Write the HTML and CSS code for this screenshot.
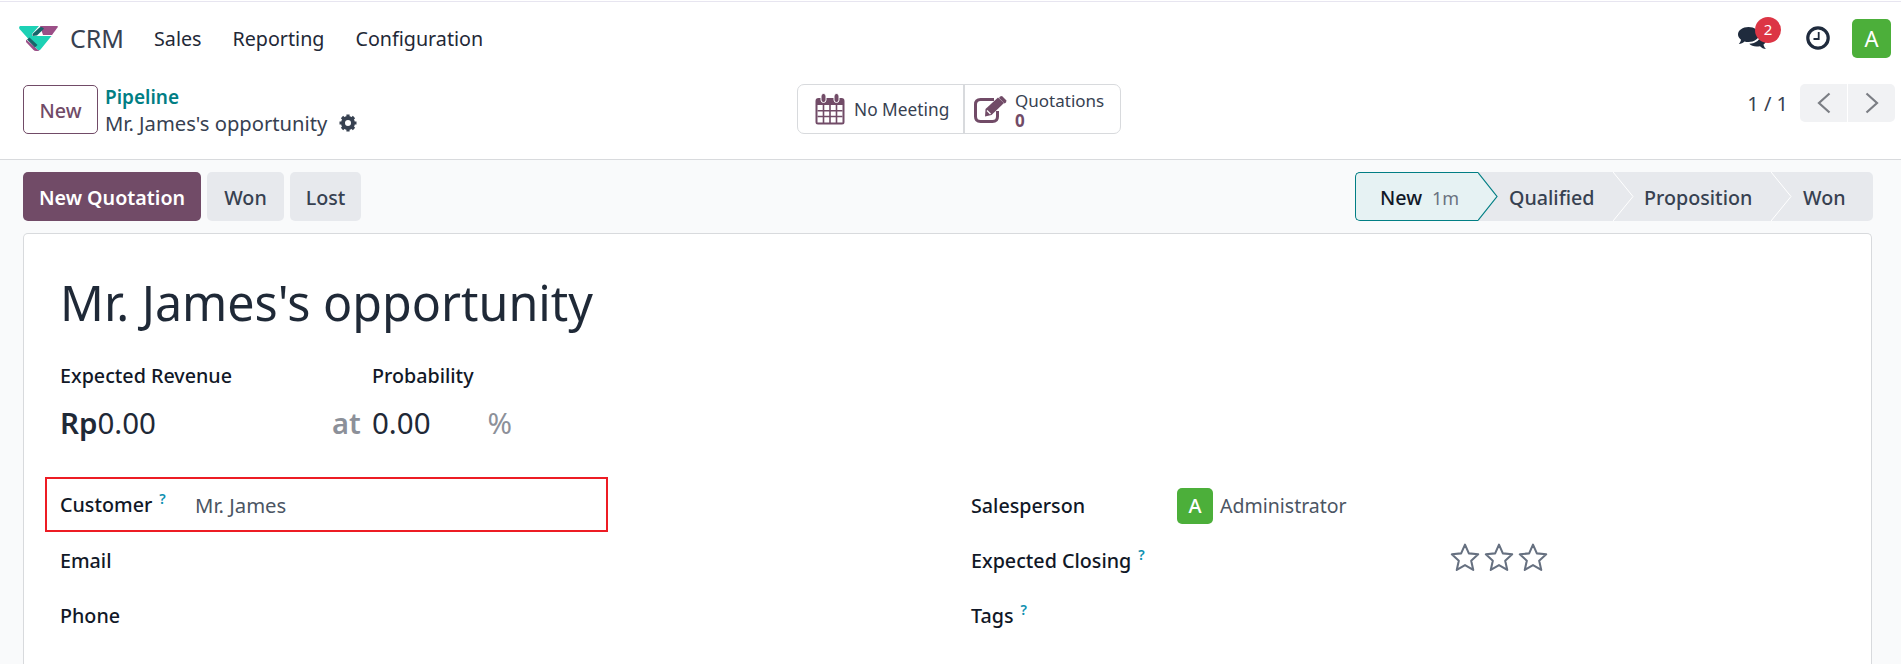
FILE: index.html
```html
<!DOCTYPE html>
<html lang="en">
<head>
<meta charset="utf-8">
<title>Mr. James's opportunity</title>
<link rel="stylesheet" href="styles.css">
</head>
<body>
<div class="app">
  <div class="topline"></div>
  <header class="navbar">
    <svg class="logo" width="39" height="25" viewBox="0 0 39 25">
      <path d="M21 0H38Q39.500 0 38.500 1.500L33 9H24Z" fill="#9b4f87"/>
      <path d="M7 13.500 20.500 25H17Q15.500 25 14 23.500L7 16Z" fill="#9b4f87"/>
      <path d="M1 0H20L13 8V10H32.500L21.500 23.500Q20 25 18.500 23.500L9 12.500 .5 3Q-.5 1 1 0Z" fill="#1dd1b5"/>
      <path d="M13.500 8 20.500 1.500Q22 .2 24 1.800L25 2.800 18 9.500 13.500 10Z" fill="#17656a"/>
      <path d="M8 13.500 10.500 11.500 18.500 19 16 21.500Z" fill="#17656a"/>
    </svg>
    <span class="brand">CRM</span>
    <nav class="menu">
      <a>Sales</a>
      <a>Reporting</a>
      <a>Configuration</a>
    </nav>
    <div class="systray">
      <div class="chat">
        <svg width="29" height="23" viewBox="0 0 29 23">
          <path d="M10.5 0C16.3 0 21 3.300 21 7.500S16.300 15 10.500 15C9 15 7.700 14.800 6.500 14.400 5 15.800 3 16.800.8 17 2 15.700 2.700 14.300 3 12.700 1.200 11.400 0 9.500 0 7.500 0 3.300 4.700 0 10.500 0Z" fill="#1f2b3d"/>
          <path d="M22.500 6.500C26 7.500 28.500 9.800 28.500 12.500 28.500 14.500 27.300 16.200 25.500 17.400 25.800 19 26.500 20.500 28 22 25.500 21.800 23.500 20.800 22 19.200 20.900 19.500 19.700 19.600 18.500 19.600 15.500 19.600 12.900 18.500 11.300 16.800 17.800 16.600 23 12.800 22.500 6.500Z" fill="#1f2b3d"/>
        </svg>
        <span class="badge">2</span>
      </div>
      <svg class="clock" width="24" height="24" viewBox="0 0 24 24">
        <circle cx="12" cy="12" r="10.200" fill="none" stroke="#1f2b3d" stroke-width="3.200"/>
        <path d="M12.700 6V13H7.500" fill="none" stroke="#1f2b3d" stroke-width="1.800"/>
      </svg>
      <span class="avatar avatar-lg">A</span>
    </div>
  </header>

  <section class="control">
    <div class="control-left">
      <button class="btn btn-outline">New</button>
      <div class="crumbs">
        <a class="crumb-link">Pipeline</a>
        <div class="crumb-current">Mr. James's opportunity
          <svg class="gear" width="18" height="18" viewBox="0 0 18 18">
            <circle cx="9" cy="9" r="5" fill="none" stroke="#374151" stroke-width="4"/>
            <path d="M9 0.500V3.500M9 14.500V17.500M0.500 9H3.500M14.500 9H17.500M3 3L5 5M13 13L15 15M15 3L13 5M5 13L3 15" stroke="#374151" stroke-width="3.200"/>
          </svg>
        </div>
      </div>
    </div>
    <div class="stats">
      <div class="stat stat-meeting">
        <svg width="30" height="32" viewBox="0 0 30 32">
          <path d="M1.500 5H26.500Q29.500 5 29.500 8V29Q29.500 31.500 27 31.500H3Q.5 31.500 .5 29V8Q.5 5 3.500 5Z" fill="#714b67"/>
          <path d="M2.500 12H27.500V29.500H2.500Z" fill="#fff"/>
          <path d="M2.500 17.700H27.500M2.500 23.500H27.500M8.500 12V30M15 12V30M21.500 12V30" stroke="#714b67" stroke-width="1.600"/>
          <rect x="6" y="0.500" width="5" height="9" rx="2.500" fill="#714b67" stroke="#fff"/>
          <rect x="19" y="0.500" width="5" height="9" rx="2.500" fill="#714b67" stroke="#fff"/>
        </svg>
        <span class="stat-text stat-text-meeting">No Meeting</span>
      </div>
      <div class="stat stat-quote">
        <svg width="33" height="27" viewBox="0 0 33 27">
          <path d="M20 3.500H6.500Q1.500 3.500 1.500 8.500V20.500Q1.500 25.500 6.500 25.500H18.500Q23.500 25.500 23.500 20.500V15" fill="none" stroke="#714b67" stroke-width="3"/>
          <path d="M11.500 13 24 1.500 30 7 17.500 19 11 20.500Z" fill="#714b67"/>
          <path d="M26 0.500 28 0 32.500 4.500 32 6.500 30.500 7.500 25 2Z" fill="#714b67"/>
          <path d="M13 14.500 16.500 18" stroke="#fff" stroke-width="1.200"/>
        </svg>
        <div class="stat-stack">
          <span class="stat-text">Quotations</span>
          <span class="stat-num">0</span>
        </div>
      </div>
    </div>
    <div class="pager">
      <span class="pager-count">1 / 1</span>
      <div class="pager-btns">
        <button class="pager-btn">
          <svg width="14" height="22" viewBox="0 0 14 22"><path d="M12.500 1.500 2 11 12.500 20.500" fill="none" stroke="#7b7e84" stroke-width="2.200"/></svg>
        </button>
        <button class="pager-btn">
          <svg width="14" height="22" viewBox="0 0 14 22"><path d="M1.500 1.500 12 11 1.500 20.500" fill="none" stroke="#7b7e84" stroke-width="2.200"/></svg>
        </button>
      </div>
    </div>
  </section>

  <main class="content">
    <div class="actions">
      <div class="action-btns">
        <button class="btn btn-primary">New Quotation</button>
        <button class="btn btn-grey">Won</button>
        <button class="btn btn-grey">Lost</button>
      </div>
      <div class="statusbar">
        <div class="stage stage-active">New <span class="stage-age">1m</span></div>
        <svg class="tip" width="20" height="49" viewBox="0 0 20 49"><path d="M0 0.500 19 24.500 0 48.500" fill="#e6f2f3" stroke="#017e84" stroke-width="1.200"/></svg>
        <div class="stage stage-q">Qualified</div>
        <svg class="sep" width="21" height="49" viewBox="0 0 21 49"><path d="M0 0 20 24.500 0 49" fill="none" stroke="#fff" stroke-width="1"/></svg>
        <div class="stage stage-p">Proposition</div>
        <svg class="sep" width="21" height="49" viewBox="0 0 21 49"><path d="M0 0 20 24.500 0 49" fill="none" stroke="#fff" stroke-width="1"/></svg>
        <div class="stage stage-w">Won</div>
      </div>
    </div>

    <article class="sheet">
      <h1 class="title">Mr. James's opportunity</h1>
      <div class="metrics">
        <div class="metric metric-rev">
          <div class="label">Expected Revenue</div>
          <div class="value"><b class="cur">Rp</b>0.00</div>
        </div>
        <div class="at">at</div>
        <div class="metric metric-prob">
          <div class="label">Probability</div>
          <div class="value value-prob"><span>0.00</span><span class="pct">%</span></div>
        </div>
      </div>
      <div class="groups">
        <div class="group group-left">
          <div class="row row-marked">
            <span class="label row-label">Customer<sup class="help">?</sup></span>
            <span class="row-value value-customer">Mr. James</span>
          </div>
          <div class="row"><span class="label row-label">Email</span></div>
          <div class="row"><span class="label row-label">Phone</span></div>
        </div>
        <div class="group group-right">
          <div class="row">
            <span class="label row-label-r">Salesperson</span>
            <span class="avatar avatar-sm">A</span>
            <span class="row-value">Administrator</span>
          </div>
          <div class="row">
            <span class="label row-label-r">Expected Closing<sup class="help">?</sup></span>
            <div class="stars">
              <svg width="34" height="33" viewBox="0 0 24 24"><path d="M12 2.600 14.800 9 21.600 9.700 16.500 14.300 18 21 12 17.500 6 21 7.500 14.300 2.400 9.700 9.200 9Z" fill="none" stroke="#667080" stroke-width="1.500" stroke-linejoin="round"/></svg>
              <svg width="34" height="33" viewBox="0 0 24 24"><path d="M12 2.600 14.800 9 21.600 9.700 16.500 14.300 18 21 12 17.500 6 21 7.500 14.300 2.400 9.700 9.200 9Z" fill="none" stroke="#667080" stroke-width="1.500" stroke-linejoin="round"/></svg>
              <svg width="34" height="33" viewBox="0 0 24 24"><path d="M12 2.600 14.800 9 21.600 9.700 16.500 14.300 18 21 12 17.500 6 21 7.500 14.300 2.400 9.700 9.200 9Z" fill="none" stroke="#667080" stroke-width="1.500" stroke-linejoin="round"/></svg>
            </div>
          </div>
          <div class="row"><span class="label row-label-r">Tags<sup class="help">?</sup></span></div>
        </div>
      </div>
    </article>
  </main>
</div>
</body>
</html>
```

FILE: styles.css
```css
* { box-sizing: border-box; }
html, body { margin: 0; height: 100%; overflow: hidden; background: #fff; }
body { font-family: "Noto Sans", "Open Sans", sans-serif; font-size: 19.700px; color: #374151; }
.app { height: 664px; display: flex; flex-direction: column; overflow: hidden; }
.topline { height: 1px; margin-top: 1px; background: #e7e5f0; flex: none; }

.navbar { height: 72px; flex: none; display: flex; align-items: center; padding: 0 10px 0 19px; }
.logo { flex: none; margin-right: 12px; }
.brand { font-size: 25px; color: #374151; margin-right: 30px; }
.menu { display: flex; gap: 31px; color: #1f2937; }
.systray { margin-left: auto; display: flex; align-items: center; }
.chat { position: relative; display: flex; margin-right: 39px; }
.badge { position: absolute; top: -10px; left: 17px; width: 26px; height: 26px; border-radius: 50%; background: #dc3545; color: #fff; font-size: 15px; line-height: 25px; text-align: center; }
.clock { margin-right: 22px; }
.avatar { display: flex; align-items: center; justify-content: center; background: #4caf3a; color: #fff; border-radius: 5px; }
.avatar-lg { width: 39px; height: 39px; font-size: 22px; }
.avatar-sm { width: 36px; height: 36px; font-size: 20px; font-weight: 500; margin: 0 7px 0 1px; }

.control { height: 86px; flex: none; border-bottom: 1px solid #d8dadd; display: grid; grid-template-columns: 774px 324px 1fr; padding: 10px 6px 0 23px; align-items: start; }
.control-left { display: flex; gap: 7px; padding-top: 1px; }
.btn { font: inherit; font-weight: 500; height: 49px; border-radius: 5px; border: 1px solid transparent; padding: 2px 0 0; color: #374151; }
.btn-outline { width: 75px; background: #fff; border-color: #714b67; color: #714b67; }
.crumbs { display: flex; flex-direction: column; line-height: 26px; margin-top: -1px; }
.crumb-link { color: #017e84; font-weight: 600; font-size: 19px; }
.crumb-current { display: flex; align-items: center; gap: 12px; color: #374151; font-size: 20.200px; }
.gear { flex: none; }

.stats { display: flex; height: 50px; border: 1px solid #d8dadd; border-radius: 7px; }
.stat { display: flex; align-items: center; }
.stat-meeting { width: 167px; padding-left: 17px; gap: 9px; border-right: 2px solid #d8dadd; }
.stat-quote { flex: 1; padding-left: 9px; gap: 8px; }
.stat-text { font-size: 17px; color: #374151; line-height: 20px; }
.stat-text-meeting { font-size: 17.300px; padding-top: 2px; }
.stat-stack { display: flex; flex-direction: column; padding-top: 2px; }
.stat-num { font-size: 17px; font-weight: 700; color: #714b67; line-height: 19px; }

.pager { display: flex; align-items: center; justify-content: flex-end; gap: 12px; height: 38px; }
.pager-count { font-size: 20px; color: #374151; }
.pager-btns { display: flex; gap: 1px; width: 95px; height: 38px; }
.pager-btn { flex: 1; border: 0; padding: 0; background: #f1f2f4; display: flex; align-items: center; justify-content: center; }
.pager-btn:first-child { border-radius: 5px 0 0 5px; }
.pager-btn:last-child { border-radius: 0 5px 5px 0; }

.content { flex: 1; min-height: 0; background: #f9fafb; padding: 12px 29px 0 23px; display: flex; flex-direction: column; gap: 12px; }
.actions { display: flex; justify-content: space-between; flex: none; }
.action-btns { display: flex; gap: 6px; }
.btn-primary { width: 178px; background: #714b67; color: #fff; font-weight: 600; }
.btn-grey { background: #e7e9ed; font-weight: 500; width: 77px; }
.btn-grey:last-child { width: 71px; }

.statusbar { display: flex; align-items: stretch; height: 49px; background: #e7e9ed; border-radius: 5px; font-weight: 500; margin-right: -1px; }
.stage { display: flex; align-items: center; color: #374151; flex: none; padding-top: 2px; }
.stage-active { width: 123px; padding-left: 24px; gap: 10px; background: #e6f2f3; border: 1px solid #017e84; border-right: 0; border-radius: 5px 0 0 5px; color: #111827; }
.stage-age { color: #6b7280; font-weight: 400; font-size: 18px; }
.tip { flex: none; }
.stage-q { width: 115px; padding-left: 11px; }
.stage-p { width: 137px; padding-left: 10px; }
.stage-w { width: 81px; padding-left: 11px; }
.sep { flex: none; }

.sheet { flex: 1; background: #fff; border: 1px solid #d8dadd; border-bottom: 0; border-radius: 5px 5px 0 0; padding: 37px 36px 0; }
.title { margin: 0; font-size: 48.400px; font-weight: 400; line-height: 62px; color: #1f2937; }
.metrics { display: flex; margin-top: 30px; }
.label { font-weight: 500; color: #111827; }
.metric .label { line-height: 26px; margin-bottom: 14px; }
.value { font-size: 29.500px; line-height: 40px; color: #1f2937; }
.cur { font-weight: 600; }
.metric-rev { width: 272px; }
.at { width: 40px; padding-top: 40px; font-size: 29px; line-height: 40px; color: #8c9099; font-weight: 600; }
.value-prob { display: flex; gap: 57px; }
.pct { color: #8c9099; }

.groups { display: flex; margin-top: 34px; margin-left: -15px; }
.group-left { width: 563px; }
.group-right { margin-left: 348px; flex: 1; }
.row { display: flex; align-items: center; height: 55px; padding: 2px 0 0 15px; }
.row-marked { border: 2px solid #ed1c24; padding: 0 0 0 13px; }
.row-label { width: 135px; flex: none; }
.row-label-r { width: 205px; flex: none; }
.row-value { color: #4b5563; font-size: 19.500px; }
.value-customer { font-size: 20.300px; }
.help { color: #0d8fb0; font-size: 14px; font-weight: 600; margin-left: 7px; vertical-align: 8px; line-height: 0; }
.stars { display: flex; margin-left: 272px; margin-bottom: 6px; }
```
